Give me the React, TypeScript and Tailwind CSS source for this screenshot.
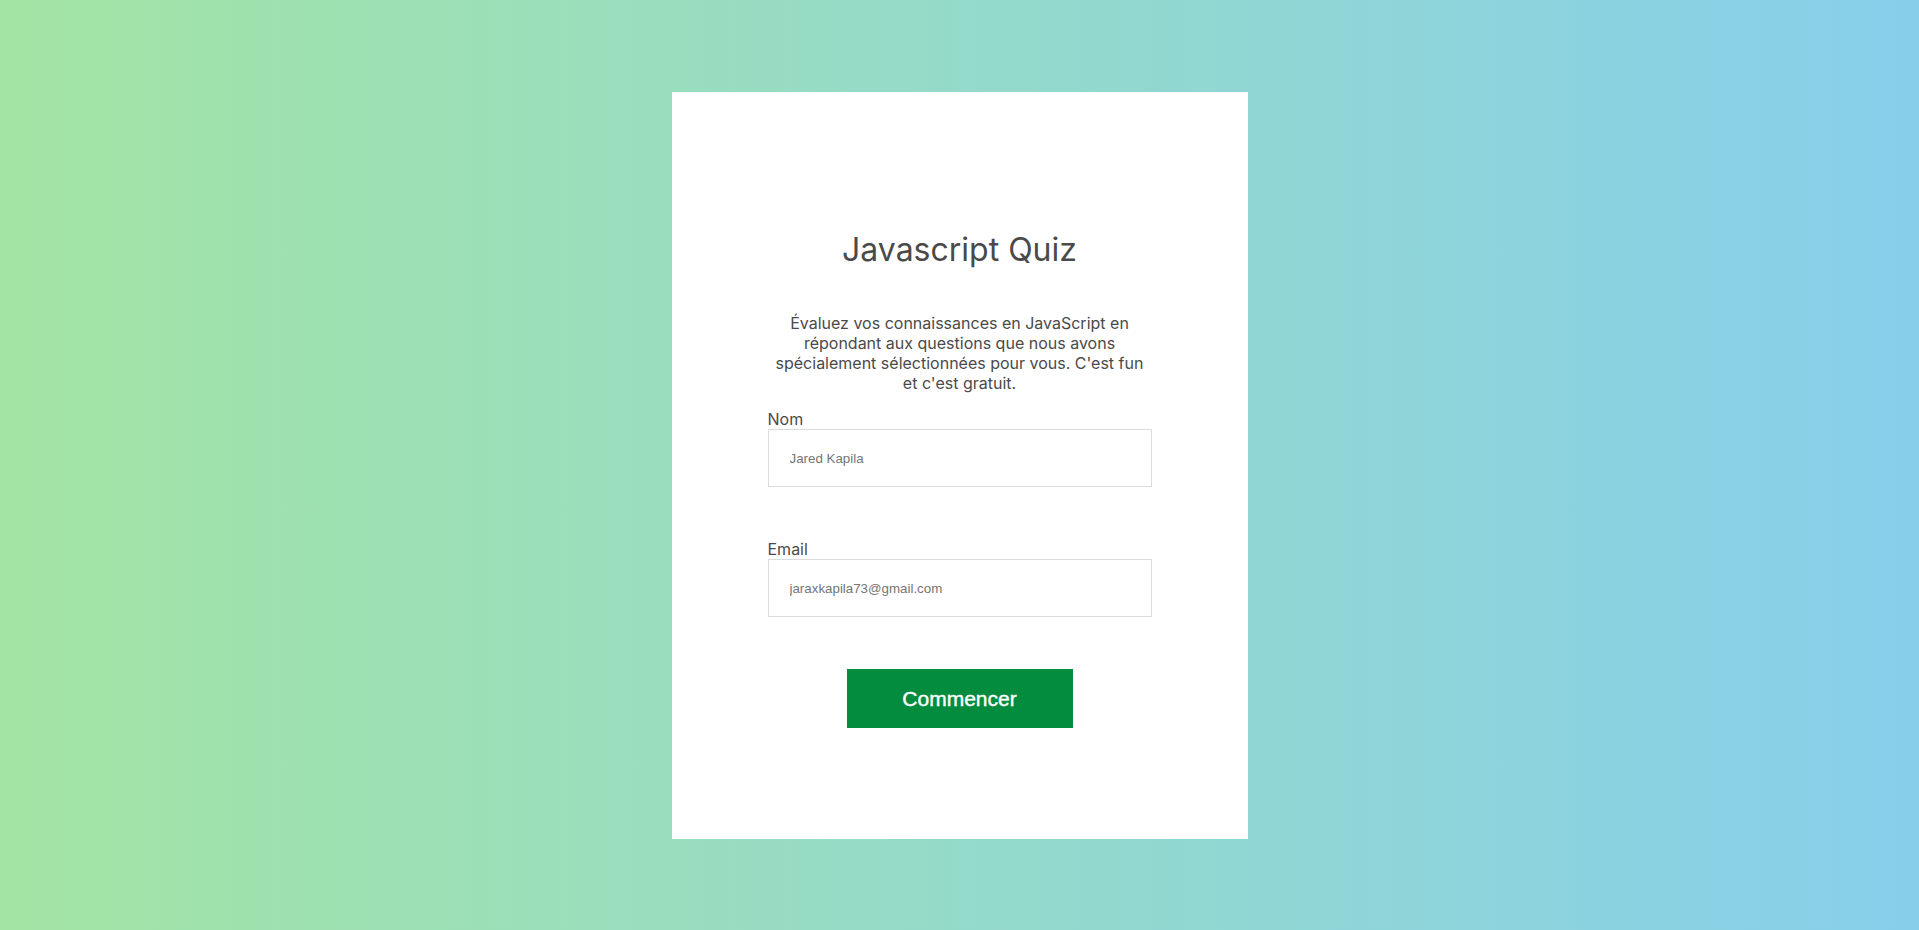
export default function App() {
  return (
    <div className="min-h-screen w-full bg-gradient-to-r from-[#a3e4a3] to-[#87ceeb] pt-[92px] pb-[91px] font-['Inter',sans-serif]">
      <div className="mx-auto flex h-[747px] w-[576px] flex-col items-center bg-white pt-[138px]">
        <h1 className="text-[32px] leading-[39px] font-normal text-[#4a4a4a]">Javascript Quiz</h1>

        <p className="mt-[44px] w-[376px] text-center text-[16px] leading-[20px] text-[#4a4a4a]">
          Évaluez vos connaissances en JavaScript en répondant aux questions que nous avons spécialement
          sélectionnées pour vous. C'est fun et c'est gratuit.
        </p>

        <form className="mt-[16px] flex w-[384px] flex-col items-center" onSubmit={(e) => e.preventDefault()}>
          <div className="w-full">
            <label htmlFor="nom" className="block text-[16px] leading-[20px] text-[#4a4a4a]">
              Nom
            </label>
            <input
              id="nom"
              type="text"
              placeholder="Jared Kapila"
              className="block h-[58px] w-full border border-[#dcdcdc] pl-[21px] font-['Liberation_Sans',Arial,sans-serif] text-[13.33px] text-[#666] outline-none placeholder:text-[#757575]"
            />
          </div>

          <div className="mt-[52px] w-full">
            <label htmlFor="email" className="block text-[16px] leading-[20px] text-[#4a4a4a]">
              Email
            </label>
            <input
              id="email"
              type="email"
              placeholder="jaraxkapila73@gmail.com"
              className="block h-[58px] w-full border border-[#dcdcdc] pl-[21px] font-['Liberation_Sans',Arial,sans-serif] text-[13.33px] text-[#666] outline-none placeholder:text-[#757575]"
            />
          </div>

          <button
            type="submit"
            className="mt-[52px] h-[59px] w-[226px] bg-[#038c3e] font-['Liberation_Sans',Arial,sans-serif] text-[21px] text-white [-webkit-text-stroke:0.4px_white]"
          >
            Commencer
          </button>
        </form>
      </div>
    </div>
  );
}
